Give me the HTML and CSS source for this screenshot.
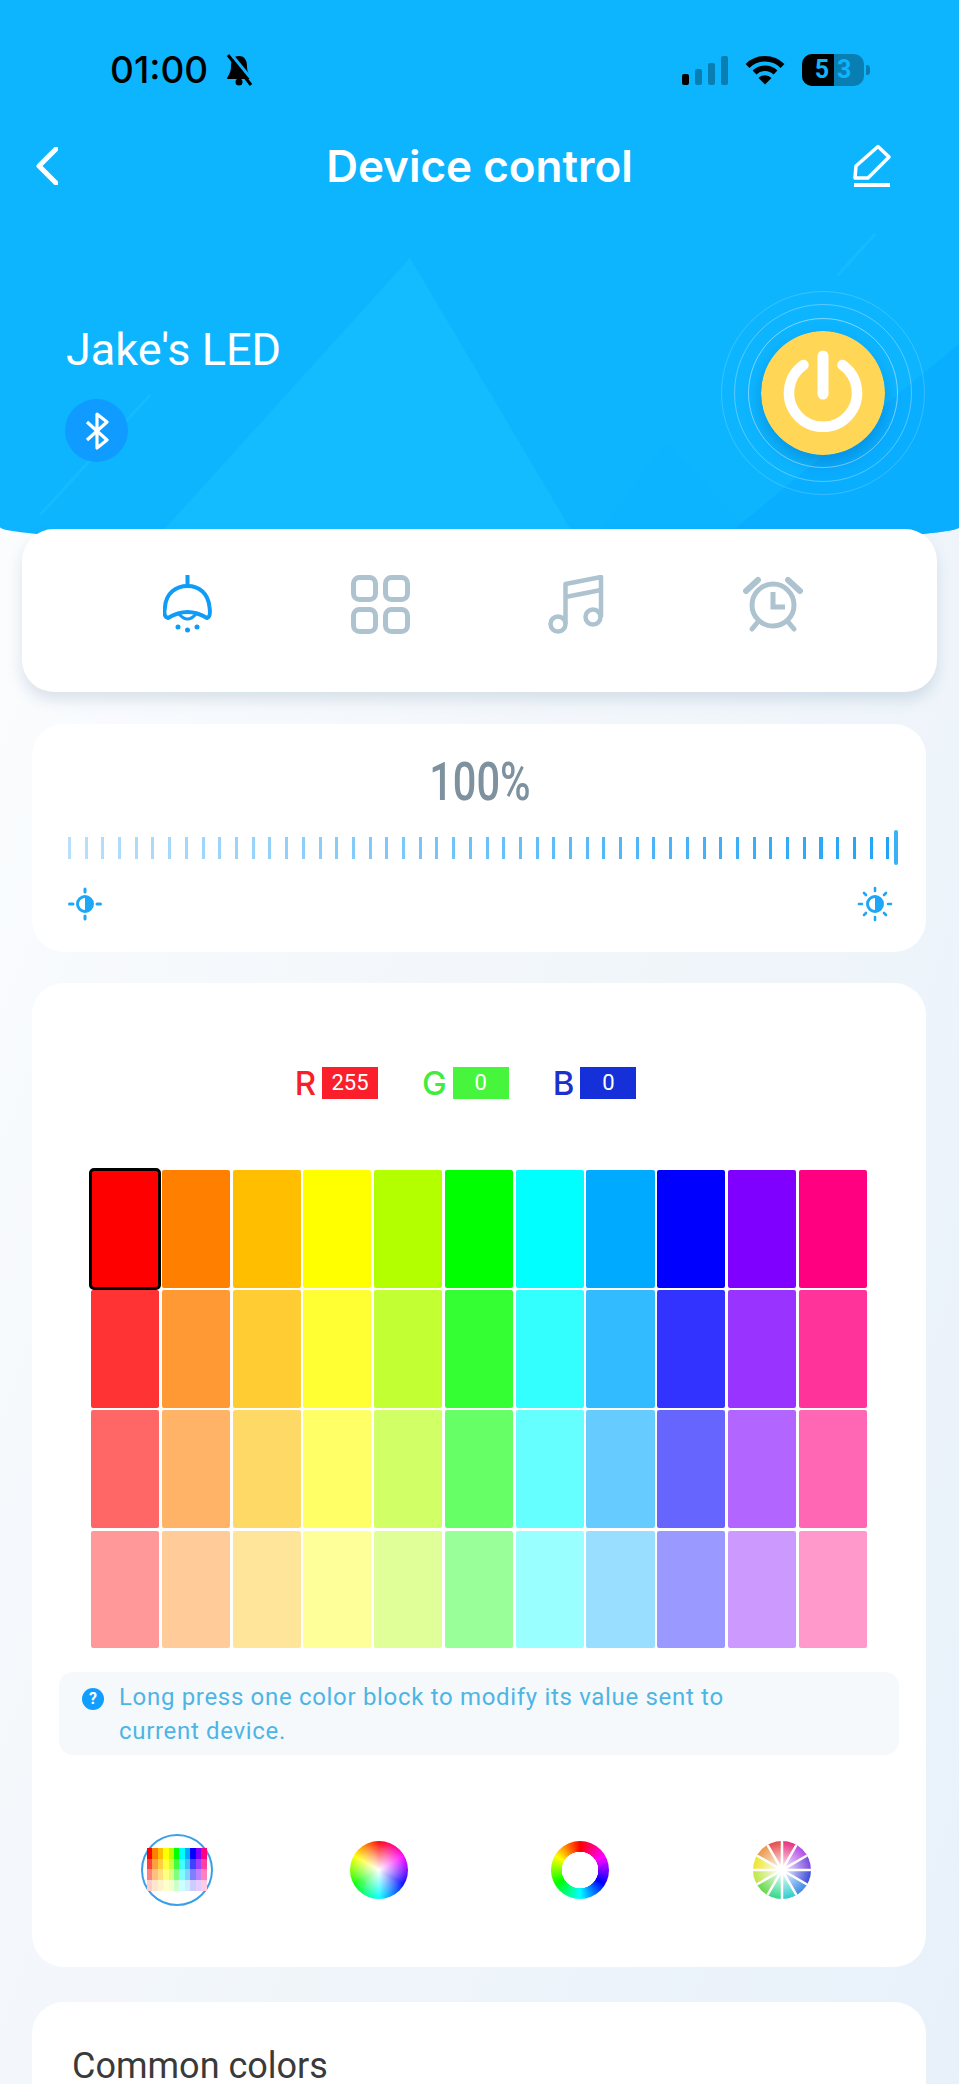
FILE: index.html
```html
<!DOCTYPE html>
<html lang="en">
<head>
    <meta charset="UTF-8">
    <meta name="viewport" content="width=device-width, initial-scale=1.0">
    <title>Device control</title>
    <link rel="stylesheet" href="styles.css">
</head>
<body>
    <div class="hero">
        <svg class="hero-bg" width="959" height="545" viewBox="0 0 959 545">
            <polygon points="410,258 150,545 580,545" fill="#13bcff"/>
            <polygon points="667,441 590,545 760,545" fill="#0cb3ff"/>
            <polygon points="959,344 715,545 959,545" fill="#0aaeff"/>
            <line x1="875" y1="234" x2="838" y2="275" stroke="#17baff" stroke-width="3"/>
            <line x1="40" y1="515" x2="150" y2="395" stroke="#17baff" stroke-width="3"/>
        </svg>

        <div class="status">
            <div class="status-left">
                <span class="time">01:00</span>
                <svg class="bell" width="28" height="32" viewBox="0 0 28 32">
                    <path d="M14 2C8 2 6 7 6 12C6 19 3 21 2 25H26C25 21 22 19 22 12C22 7 20 2 14 2Z" fill="#000"/>
                    <circle cx="14" cy="28" r="3.5" fill="#000"/>
                    <line x1="6" y1="0" x2="29" y2="28" stroke="#0db5ff" stroke-width="3"/>
                    <line x1="3" y1="1" x2="26" y2="31" stroke="#000" stroke-width="3"/>
                </svg>
            </div>
            <div class="status-right">
                <div class="signal">
                    <span class="bar bar-on"></span>
                    <span class="bar bar-2"></span>
                    <span class="bar bar-3"></span>
                    <span class="bar bar-4"></span>
                </div>
                <svg class="wifi" width="40" height="30" viewBox="0 0 40 30">
                    <path d="M2.5 11A25 25 0 0 1 37.5 11" fill="none" stroke="#000" stroke-width="5.5"/>
                    <path d="M9.5 17.5A15 15 0 0 1 30.5 17.5" fill="none" stroke="#000" stroke-width="5.5"/>
                    <path d="M13.5 23A9 9 0 0 1 26.5 23L20 29.5Z" fill="#000"/>
                </svg>
                <div class="battery">
                    <div class="battery-body">
                        <span class="battery-fill"></span>
                        <span class="battery-text">53</span>
                    </div>
                    <span class="battery-knob"></span>
                </div>
            </div>
        </div>

        <div class="navbar">
            <svg width="22" height="38" viewBox="0 0 22 38">
                <path d="M20 2L3 19L20 36" fill="none" stroke="#fff" stroke-width="5" stroke-linecap="round" stroke-linejoin="round"/>
            </svg>
            <h1>Device control</h1>
            <svg class="edit" width="40" height="44" viewBox="0 0 40 44">
                <path d="M3 34L4 22L26 2.5L37 13L16 34Z" fill="none" stroke="#fff" stroke-width="3.5" stroke-linejoin="round"/>
                <line x1="2" y1="41" x2="38" y2="41" stroke="#fff" stroke-width="4"/>
            </svg>
        </div>

        <div class="device">
            <div class="device-info">
                <h2>Jake's LED</h2>
                <div class="bt-badge">
                    <svg width="26" height="38" viewBox="0 0 26 38">
                        <path d="M3 10L23 28L13 36V2L23 10L3 28" fill="none" stroke="#fff" stroke-width="3.2" stroke-linejoin="round"/>
                    </svg>
                </div>
            </div>
            <div class="power">
                <span class="ring ring-1"></span>
                <span class="ring ring-2"></span>
                <span class="ring ring-3"></span>
                <svg class="power-btn" width="124" height="124" viewBox="0 0 124 124">
                    <circle cx="62" cy="62" r="62" fill="#ffd655"/>
                    <path d="M42.5 34A34 34 0 1 0 81.5 34" fill="none" stroke="#fff" stroke-width="10.5" stroke-linecap="round"/>
                    <line x1="62" y1="25" x2="62" y2="63" stroke="#fff" stroke-width="11" stroke-linecap="round"/>
                </svg>
            </div>
        </div>
    </div>

    <div class="tabs">
        <svg width="49" height="58" viewBox="0 0 49 58">
            <path d="M24.5 1V11" stroke="#0f9cf8" stroke-width="4" stroke-linecap="round"/>
            <path d="M5 43Q0 42 2 32C3 18 13 11 24.5 11C36 11 45 18 46.5 32Q48 42 44 43Q34 37 24.5 37Q15 37 5 43Z" fill="none" stroke="#0f9cf8" stroke-width="4" stroke-linejoin="round"/>
            <path d="M16 39Q24.5 49 33 39" fill="none" stroke="#0f9cf8" stroke-width="3"/>
            <circle cx="15" cy="52" r="2.5" fill="#0f9cf8"/>
            <circle cx="24.5" cy="55" r="2.5" fill="#0f9cf8"/>
            <circle cx="34" cy="52" r="2.5" fill="#0f9cf8"/>
        </svg>
        <svg width="59" height="59" viewBox="0 0 59 59">
            <rect x="2.5" y="2.5" width="22" height="22" rx="6" fill="none" stroke="#aec3d0" stroke-width="5"/>
            <rect x="34.5" y="2.5" width="22" height="22" rx="6" fill="none" stroke="#aec3d0" stroke-width="5"/>
            <rect x="2.5" y="34.5" width="22" height="22" rx="6" fill="none" stroke="#aec3d0" stroke-width="5"/>
            <rect x="34.5" y="34.5" width="22" height="22" rx="6" fill="none" stroke="#aec3d0" stroke-width="5"/>
        </svg>
        <svg width="56" height="59" viewBox="0 0 56 59">
            <circle cx="10" cy="49" r="7.5" fill="none" stroke="#aec3d0" stroke-width="4.5"/>
            <circle cx="45" cy="42" r="7.5" fill="none" stroke="#aec3d0" stroke-width="4.5"/>
            <path d="M17.5 49V9L53 2V42" fill="none" stroke="#aec3d0" stroke-width="4.5" stroke-linejoin="round"/>
            <path d="M17.5 22L53 15" fill="none" stroke="#aec3d0" stroke-width="4.5"/>
        </svg>
        <svg width="60" height="58" viewBox="0 0 60 58">
            <circle cx="30" cy="30" r="21" fill="none" stroke="#aec3d0" stroke-width="5"/>
            <path d="M30 17V32H42" fill="none" stroke="#aec3d0" stroke-width="5"/>
            <path d="M3 16L15 5" fill="none" stroke="#aec3d0" stroke-width="6" stroke-linecap="round"/>
            <path d="M57 16L45 5" fill="none" stroke="#aec3d0" stroke-width="6" stroke-linecap="round"/>
            <path d="M9 54L14 48" fill="none" stroke="#aec3d0" stroke-width="5" stroke-linecap="round"/>
            <path d="M51 54L46 48" fill="none" stroke="#aec3d0" stroke-width="5" stroke-linecap="round"/>
        </svg>
    </div>

    <div class="card brightness">
        <div class="percent"><span>100%</span></div>
        <div class="ruler-wrap">
            <div class="ruler"></div>
            <span class="ruler-thumb"></span>
        </div>
        <div class="sun-row">
            <svg width="36" height="36" viewBox="0 0 36 36">
                <circle cx="18" cy="18" r="7.5" fill="#fff" stroke="#1ea7f7" stroke-width="3"/>
                <path d="M18 10.5A7.5 7.5 0 0 1 18 25.5Z" fill="#1ea7f7"/>
                <path d="M18 3V6M18 30V33M2.5 18H6M30 18H33.5" stroke="#1ea7f7" stroke-width="3" stroke-linecap="round"/>
            </svg>
            <svg width="36" height="36" viewBox="0 0 36 36">
                <circle cx="18" cy="18" r="7.5" fill="#fff" stroke="#1ea7f7" stroke-width="3"/>
                <path d="M18 10.5A7.5 7.5 0 0 1 18 25.5Z" fill="#1ea7f7"/>
                <path d="M18 2V5M18 31V34M2 18H5M31 18H34M7 7L9 9M27 27L29 29M29 7L27 9M9 27L7 29" stroke="#1ea7f7" stroke-width="2.6" stroke-linecap="round"/>
            </svg>
        </div>
    </div>

    <div class="card colors">
        <div class="rgb">
            <div class="rgb-item red"><span class="rgb-letter">R</span><span class="rgb-value">255</span></div>
            <div class="rgb-item green"><span class="rgb-letter">G</span><span class="rgb-value">0</span></div>
            <div class="rgb-item blue"><span class="rgb-letter">B</span><span class="rgb-value">0</span></div>
        </div>

        <div class="swatches">
            <div class="selected"></div><div></div><div></div><div></div><div></div><div></div><div></div><div></div><div></div><div></div><div></div>
            <div></div><div></div><div></div><div></div><div></div><div></div><div></div><div></div><div></div><div></div><div></div>
            <div></div><div></div><div></div><div></div><div></div><div></div><div></div><div></div><div></div><div></div><div></div>
            <div></div><div></div><div></div><div></div><div></div><div></div><div></div><div></div><div></div><div></div><div></div>
        </div>

        <div class="hint">
            <span class="hint-icon">?</span>
            <p>Long press one color block to modify its value sent to current device.</p>
        </div>

        <div class="pickers">
            <div class="picker picker-active"><span class="mini-grid"></span></div>
            <div class="picker"><span class="wheel"></span></div>
            <div class="picker"><span class="wheel wheel-ring"></span></div>
            <div class="picker">
                <span class="wheel wheel-steps">
                    <svg width="58" height="58" viewBox="0 0 58 58">
                        <path d="M29 0V58M0 29H58M14.5 3.9L43.5 54.1M3.9 14.5L54.1 43.5M43.5 3.9L14.5 54.1M54.1 14.5L3.9 43.5" stroke="#fff" stroke-width="2.5"/>
                    </svg>
                </span>
            </div>
        </div>
    </div>

    <div class="card common">
        <h3>Common colors</h3>
    </div>
</body>
</html>
```

FILE: styles.css
```css
html, body {
    margin: 0;
    padding: 0;
    height: 2084px;
    overflow: hidden;
}
body {
    font-family: Roboto, "Liberation Sans", sans-serif;
    background: linear-gradient(110deg, #fdfeff 0%, #f3f7fb 45%, #e8f1fa 100%);
    color: #333;
}
svg {
    display: block;
}

.hero {
    position: relative;
    height: 545px;
    background: #0db5ff;
    border-radius: 0 0 50% 50% / 0 0 18px 18px;
    overflow: hidden;
}
.hero-bg {
    position: absolute;
    left: 0;
    top: 0;
}
.status, .navbar, .device {
    position: relative;
}

.status {
    display: flex;
    justify-content: space-between;
    align-items: center;
    height: 32px;
    padding: 54px 89px 0 110px;
}
.status-left, .status-right {
    display: flex;
    align-items: center;
}
.time {
    font-family: Inter, Roboto, sans-serif;
    font-size: 37px;
    font-weight: 500;
    color: #000;
    line-height: 32px;
    width: 115px;
}
.signal {
    display: flex;
    align-items: flex-end;
    gap: 6px;
    height: 29px;
    margin-right: 17px;
}
.bar {
    display: block;
    width: 7px;
    border-radius: 2px;
    background: rgba(0, 0, 0, 0.3);
}
.bar-on {
    height: 11px;
    background: #000;
}
.bar-2 {
    height: 16px;
}
.bar-3 {
    height: 22px;
}
.bar-4 {
    height: 29px;
}
.wifi {
    margin-right: 17px;
}
.battery {
    display: flex;
    align-items: center;
    gap: 2px;
}
.battery-body {
    position: relative;
    width: 62px;
    height: 32px;
    border-radius: 10px;
    background: rgba(0, 0, 0, 0.3);
    overflow: hidden;
    text-align: center;
}
.battery-fill {
    position: absolute;
    left: 0;
    top: 0;
    width: 32px;
    height: 32px;
    background: #000;
}
.battery-text {
    position: relative;
    padding-left: 8px;
    font-size: 25px;
    font-weight: 700;
    line-height: 32px;
    letter-spacing: 8px;
    color: #0db5ff;
}
.battery-knob {
    width: 4px;
    height: 10px;
    border-radius: 0 3px 3px 0;
    background: rgba(0, 0, 0, 0.3);
}

.navbar {
    display: grid;
    grid-template-columns: 1fr auto 1fr;
    align-items: center;
    height: 44px;
    padding: 58px 36px 0;
}
.navbar h1 {
    margin: 0;
    font-family: Inter, Roboto, sans-serif;
    font-size: 44px;
    font-weight: 600;
    line-height: 44px;
    color: #fff;
}
.edit {
    justify-self: end;
    margin-right: 31px;
}

.device {
    display: flex;
    justify-content: space-between;
    padding: 143px 74px 0 65px;
}
.device-info {
    margin-top: -7px;
}
.device-info h2 {
    margin: 0 0 23px 1px;
    font-size: 45px;
    font-weight: 400;
    line-height: 52px;
    color: #fff;
}
.bt-badge {
    display: flex;
    align-items: center;
    justify-content: center;
    width: 63px;
    height: 63px;
    border-radius: 50%;
    background: #0f9bff;
}
.power {
    position: relative;
    width: 124px;
    height: 124px;
}
.power-btn {
    position: relative;
    border-radius: 50%;
    box-shadow: 0 8px 16px rgba(0, 90, 170, 0.35);
}
.ring {
    position: absolute;
    border-radius: 50%;
    border: 1px solid rgba(255, 255, 255, 0.45);
}
.ring-1 {
    inset: -13px;
}
.ring-2 {
    inset: -27px;
    border-color: rgba(255, 255, 255, 0.3);
}
.ring-3 {
    inset: -40px;
    border-color: rgba(255, 255, 255, 0.18);
}

.tabs {
    position: relative;
    display: flex;
    align-items: flex-start;
    justify-content: space-between;
    height: 117px;
    margin: -16px 22px 0;
    padding: 46px 134px 0 141px;
    background: #fff;
    border-radius: 32px;
    box-shadow: 0 8px 14px rgba(110, 140, 170, 0.22);
}

.card {
    margin: 32px 33px 0 32px;
    background: #fff;
    border-radius: 32px;
}

.brightness {
    height: 228px;
    box-sizing: border-box;
    padding: 33px 28px 0 36px;
}
.percent {
    height: 44px;
    margin-top: 3px;
    padding-right: 7px;
    text-align: center;
}
.percent span {
    display: inline-block;
    font-size: 54px;
    font-weight: 500;
    line-height: 44px;
    color: #7d929e;
    transform: scaleX(0.77);
}
.ruler-wrap {
    position: relative;
    margin-top: 33px;
    height: 22px;
}
.ruler {
    height: 22px;
    background: linear-gradient(90deg, #b9e0fb, #1fa3f5);
    -webkit-mask-image: repeating-linear-gradient(90deg, #000 0 3px, transparent 3px 16.7px);
    mask-image: repeating-linear-gradient(90deg, #000 0 3px, transparent 3px 16.7px);
}
.ruler-thumb {
    position: absolute;
    right: 0;
    top: -7px;
    width: 4px;
    height: 35px;
    border-radius: 2px;
    background: #3ab0f6;
}
.sun-row {
    display: flex;
    justify-content: space-between;
    margin: 27px 5px 0 -1px;
}

.colors {
    margin-top: 31px;
    height: 984px;
    box-sizing: border-box;
    padding: 84px 27px 0;
}
.rgb {
    display: flex;
    justify-content: center;
    gap: 44px;
    padding-right: 27px;
}
.rgb-item {
    display: flex;
    align-items: center;
    gap: 6px;
}
.rgb-letter {
    font-family: Inter, Roboto, sans-serif;
    font-size: 33px;
    font-weight: 500;
    line-height: 32px;
}
.rgb-value {
    width: 56px;
    height: 32px;
    font-size: 22px;
    line-height: 32px;
    text-align: center;
    color: #fff;
}
.red .rgb-letter { color: #f71f2b; }
.red .rgb-value { background: #fb1f2b; }
.green .rgb-letter { color: #41ec3b; }
.green .rgb-value { background: #48f53d; }
.blue .rgb-letter { color: #1c30cc; }
.blue .rgb-value { background: #1530d8; }

.swatches {
    display: grid;
    grid-template-columns: repeat(11, 68.1px);
    grid-template-rows: repeat(4, 117.5px);
    gap: 2.7px;
    margin: 71px 0 0 32px;
}
.swatches div {
    border-radius: 2px;
}
.swatches div:nth-child(11n+1) { background: #ff0000; }
.swatches div:nth-child(11n+2) { background: #ff8000; }
.swatches div:nth-child(11n+3) { background: #ffbf00; }
.swatches div:nth-child(11n+4) { background: #ffff00; }
.swatches div:nth-child(11n+5) { background: #b3ff00; }
.swatches div:nth-child(11n+6) { background: #00ff00; }
.swatches div:nth-child(11n+7) { background: #00ffff; }
.swatches div:nth-child(11n+8) { background: #00aaff; }
.swatches div:nth-child(11n+9) { background: #0000ff; }
.swatches div:nth-child(11n+10) { background: #8000ff; }
.swatches div:nth-child(11n+11) { background: #ff0080; }
.swatches div:nth-child(n+12) { opacity: 0.8; }
.swatches div:nth-child(n+23) { opacity: 0.6; }
.swatches div:nth-child(n+34) { opacity: 0.4; }
.swatches .selected {
    outline: 3px solid #000;
    outline-offset: -1px;
    border-radius: 3px;
    position: relative;
}

.hint {
    display: flex;
    gap: 15px;
    width: 840px;
    height: 83px;
    box-sizing: border-box;
    margin-top: 24px;
    padding: 8px 24px 0 23px;
    border-radius: 14px;
    background: #f6f9fb;
}
.hint-icon {
    flex: none;
    width: 22px;
    height: 22px;
    margin-top: 8px;
    border-radius: 50%;
    background: #109eff;
    color: #fff;
    font-size: 16px;
    font-weight: 700;
    line-height: 22px;
    text-align: center;
}
.hint p {
    margin: 0;
    width: 625px;
    font-size: 24px;
    line-height: 34px;
    letter-spacing: 0.68px;
    color: #4db5e6;
}

.pickers {
    position: relative;
    height: 72px;
    margin-top: 78.5px;
}
.picker {
    position: absolute;
    top: 0;
    display: flex;
    align-items: center;
    justify-content: center;
    width: 72px;
    height: 72px;
    border-radius: 50%;
    box-sizing: border-box;
}
.picker:nth-child(1) { left: 82px; }
.picker:nth-child(2) { left: 284px; }
.picker:nth-child(3) { left: 485px; }
.picker:nth-child(4) { left: 687px; }
.picker-active {
    border: 2px solid #3a9fe6;
}
.mini-grid {
    width: 60px;
    height: 43px;
    background:
        linear-gradient(180deg, transparent 0 25%, rgba(255, 255, 255, 0.25) 25% 50%, rgba(255, 255, 255, 0.5) 50% 75%, rgba(255, 255, 255, 0.8) 75%),
        linear-gradient(90deg, #ff0000 0 9%, #ff8000 9% 18%, #ffbf00 18% 27%, #ffff00 27% 36%, #b3ff00 36% 45%, #00ff00 45% 54%, #00ffff 54% 63%, #00aaff 63% 72%, #0000ff 72% 81%, #8000ff 81% 90%, #ff0080 90%);
}
.wheel {
    position: relative;
    display: block;
    width: 58px;
    height: 58px;
    border-radius: 50%;
    background:
        radial-gradient(circle, #fff 0, rgba(255, 255, 255, 0) 72%),
        conic-gradient(#ff0000, #ff00ff, #0000ff, #00ffff, #00ff00, #ffff00, #ff0000);
}
.wheel-ring {
    background:
        radial-gradient(circle, #fff 0 18px, rgba(255, 255, 255, 0) 18.5px),
        conic-gradient(#ff0000, #ff00ff, #0000ff, #00ffff, #00ff00, #ffff00, #ff0000);
}
.wheel-steps {
    overflow: hidden;
    background:
        radial-gradient(circle, #fff 0, rgba(255, 255, 255, 0.2) 70%, rgba(255, 255, 255, 0) 100%),
        conic-gradient(#e0005e 0 30deg, #a020e0 30deg 60deg, #5a1ed8 60deg 90deg, #1020d0 90deg 120deg, #1070e0 120deg 150deg, #00c0c0 150deg 180deg, #00d070 180deg 210deg, #40d020 210deg 240deg, #b0e020 240deg 270deg, #e8e000 270deg 300deg, #e88020 300deg 330deg, #e02020 330deg 360deg);
}

.common {
    height: 82px;
    box-sizing: border-box;
    margin-top: 35px;
    padding: 46px 40px 0;
    border-radius: 32px 32px 0 0;
}
.common h3 {
    margin: 0;
    font-size: 36px;
    font-weight: 400;
    line-height: 36px;
    color: #3a3a3a;
}
```
